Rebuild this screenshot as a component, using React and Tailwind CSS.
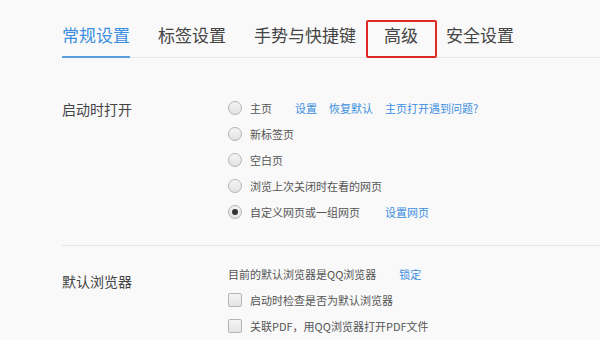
import { useState } from "react";

const TABS = ["常规设置", "标签设置", "手势与快捷键", "高级", "安全设置"];

const STARTUP = [
  { label: "主页", links: ["设置", "恢复默认", "主页打开遇到问题?"] },
  { label: "新标签页" },
  { label: "空白页" },
  { label: "浏览上次关闭时在看的网页" },
  { label: "自定义网页或一组网页", links: ["设置网页"], linkGap: true },
];

function Radio({ checked }) {
  return (
    <span className="w-[14px] h-[14px] rounded-full border border-[#b4b4b4] bg-gradient-to-b from-[#f4f4f4] to-[#e2e2e2] flex items-center justify-center shrink-0">
      {checked && <span className="w-[6px] h-[6px] rounded-full bg-[#333]" />}
    </span>
  );
}

function Checkbox() {
  return <span className="w-[14px] h-[14px] rounded-[2px] border border-[#b4b4b4] bg-gradient-to-b from-[#f4f4f4] to-[#e4e4e4] shrink-0" />;
}

export default function App() {
  const [active] = useState(0);
  const [startup] = useState(4);

  return (
    <div className="w-[600px] h-[340px] overflow-hidden bg-[#f9f9f9] text-[#444] font-['Microsoft_YaHei','Noto_Sans_CJK_SC',sans-serif]">
      {/* tabs */}
      <div className="pl-[62px] pt-[20px]">
        <div className="flex gap-[28px] border-b border-[#e6e6e6]">
          {TABS.map((t, i) => (
            <div key={t} className={`relative h-[37px] flex items-center pb-[7px] text-[17px] ${i === active ? "text-[#3b8ee0]" : "text-[#444]"}`}>
              {t}
              {i === active && <span className="absolute left-0 right-0 -bottom-px h-[2px] bg-[#5a9ee0]" />}
              {t === "高级" && <span className="absolute -left-[18px] -right-[19px] top-0 -bottom-px border-2 border-[#dd2a22] rounded-[2px]" />}
            </div>
          ))}
        </div>
      </div>

      <div className="pl-[62px]">
        {/* startup */}
        <div className="flex pt-[37px]">
          <div className="w-[166px] h-[26px] flex items-center pt-[3px] text-[14px] text-[#444]">启动时打开</div>
          <div className="flex flex-col">
            {STARTUP.map((o, i) => (
              <div key={o.label} className="h-[26px] flex items-center text-[11px]">
                <Radio checked={i === startup} />
                <span className="ml-[8px] text-[#555]">{o.label}</span>
                {o.links && (
                  <div className={`flex gap-[12px] text-[#3b8ee0] ${o.linkGap ? "ml-[25px]" : "ml-[23px]"}`}>
                    {o.links.map(l => <span key={l}>{l}</span>)}
                  </div>
                )}
              </div>
            ))}
          </div>
        </div>

        <div className="mt-[20px] border-t border-[#e6e6e6]" />

        {/* default browser */}
        <div className="flex pt-[15px]">
          <div className="w-[166px] h-[26px] flex items-center text-[14px] text-[#444] mt-[7px]">默认浏览器</div>
          <div className="flex flex-col text-[11px]">
            <div className="h-[26px] flex items-center text-[#555]">
              目前的默认浏览器是QQ浏览器
              <span className="ml-[23px] text-[#3b8ee0]">锁定</span>
            </div>
            <div className="h-[26px] flex items-center">
              <Checkbox />
              <span className="ml-[8px] text-[#555]">启动时检查是否为默认浏览器</span>
            </div>
            <div className="h-[26px] flex items-center">
              <Checkbox />
              <span className="ml-[8px] text-[#555]">关联PDF，用QQ浏览器打开PDF文件</span>
            </div>
          </div>
        </div>
      </div>
    </div>
  );
}
